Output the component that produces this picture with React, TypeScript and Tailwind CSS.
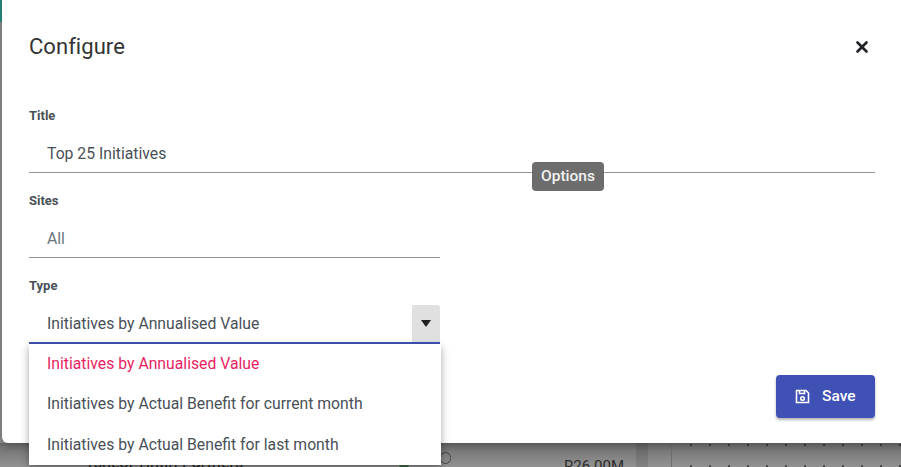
import { X } from 'lucide-react';

const roboto = "font-['Roboto',sans-serif]";
const dots = Array.from({ length: 12 }, (_, i) => i);

function DotRow({ color }: { color: string }) {
  return (
    <div className="flex justify-between w-[211px]">
      {dots.map((d) => (
        <div key={d} className={`w-[2px] h-[2px] ${color}`} />
      ))}
    </div>
  );
}

function Field({ label, value, muted, half }: { label: string; value: string; muted?: boolean; half?: boolean }) {
  return (
    <div className={half ? 'w-[411px]' : 'w-full'}>
      <div className="h-[19px] text-[13px] leading-[18px] font-bold text-[#495057]">{label}</div>
      <div className={`h-[47px] pl-[18px] pt-[15px] text-[15.75px] leading-[25px] border-b border-[#949494] ${muted ? 'text-[#6c757d]' : 'text-[#495057]'}`}>
        {value}
      </div>
    </div>
  );
}

function SaveIcon() {
  return (
    <svg width="15" height="15" viewBox="0 0 15 15" fill="none" stroke="white" strokeWidth="1.6">
      <path d="M1.5 1.5h9.5l2.5 2.5v9.5h-12z" />
      <path d="M4.5 1.5v3h5v-3" />
      <circle cx="7.5" cy="9.5" r="1.8" />
    </svg>
  );
}

export default function App() {
  return (
    <div className={`relative w-[901px] h-[467px] overflow-hidden bg-[#8f8f8f] ${roboto}`}>
      <div className="w-[6px] h-[22px] bg-[#2a9187]" />

      {/* dimmed page behind the dialog, only its lower edge shows */}
      <div className="absolute left-0 right-0 bottom-0 h-[24px] flex overflow-hidden bg-gradient-to-b from-[#6f6f6f] to-[#929292]">
        <div className="w-[636px] shrink-0 flex items-start pl-[85px]">
          <div className="w-[314px] mt-[11px] text-[16px] leading-[18px] tracking-[0.1px] text-[#1d1d1d]">Tshepi Tintiri Partners</div>
          <div className="mt-[20px] w-[10px] h-[10px] rounded-full bg-[#3f6b45]" />
          <div className="mt-[9px] ml-[31px] w-[11px] h-[12px] rounded-full border border-[#444]" />
          <div className="mt-[14px] ml-[113px] text-[15px] leading-[18px] text-[#2c2c2c]">R26.00M</div>
        </div>
        <div className="w-[12px] bg-black/10" />
        <div className="w-[24px]" />
        <div className="w-px bg-[#6d6d6d]" />
        <div className="pl-[18px] pt-px flex flex-col gap-[19px]">
          <DotRow color="bg-[#3c3c3c]" />
          <DotRow color="bg-[#4a4a4a]" />
        </div>
      </div>

      {/* dialog */}
      <div className="absolute left-[2px] top-[-10px] w-[920px] h-[453px] bg-white rounded-[6px] shadow-[0_2px_8px_rgba(0,0,0,0.3)]">
        <div className="w-[899px] pl-[27px] pr-[26px] pt-[11px]">
          <div className="flex items-center justify-between h-[72px] pt-[20px]">
            <h2 className="text-[22px] leading-[32px] text-[#333] tracking-[0.05px]">Configure</h2>
            <X className="w-[18px] h-[18px] mr-[4px] text-[#212529]" strokeWidth={3.6} />
          </div>
          <div className="mt-[34px] flex flex-col gap-[19px]">
            <Field label="Title" value="Top 25 Initiatives" />
            <Field label="Sites" value="All" muted half />
            <div className="w-[411px]">
              <div className="h-[19px] text-[13px] leading-[18px] font-bold text-[#495057]">Type</div>
              <div className="flex h-[48px] pl-[18px] pt-[15px] text-[15.75px] leading-[25px] text-[#495057] border-b-2 border-[#3f51b5] relative">
                Initiatives by Annualised Value
                <div className="absolute right-0 bottom-0 top-[9px] w-[28px] bg-[#e0e0e0] flex items-center justify-center rounded-tr-[3px]">
                  <div className="w-0 h-0 border-x-[5px] border-x-transparent border-t-[7px] border-t-[#212121]" />
                </div>
              </div>
            </div>
          </div>
          <div className="flex justify-end mt-[31px]">
            <button className="flex items-center w-[99px] h-[43px] pl-[19px] gap-[12px] bg-[#3f51b5] rounded-[4px] text-white text-[15.5px] font-medium shadow-[0_2px_3px_rgba(0,0,0,0.3)]">
              <SaveIcon />
              Save
            </button>
          </div>
        </div>
      </div>

      {/* tooltip */}
      <div className="absolute left-[532px] top-[162px] w-[72px] h-[29px] rounded-[4px] bg-[#6d6d6d] text-[#f2f2f2] text-[15.5px] font-medium leading-[28px] text-center">
        Options
      </div>

      {/* open dropdown */}
      <div className="absolute left-[29px] top-[344px] w-[412px] h-[121px] bg-white shadow-[0_3px_8px_rgba(0,0,0,0.35)] text-[15.75px] flex flex-col">
        <div className="h-[39px] pl-[18px] flex items-center text-[#e91e63]">Initiatives by Annualised Value</div>
        <div className="h-[41px] pl-[18px] flex items-center text-[#495057]">Initiatives by Actual Benefit for current month</div>
        <div className="h-[41px] pl-[18px] flex items-center text-[#495057]">Initiatives by Actual Benefit for last month</div>
      </div>
    </div>
  );
}
